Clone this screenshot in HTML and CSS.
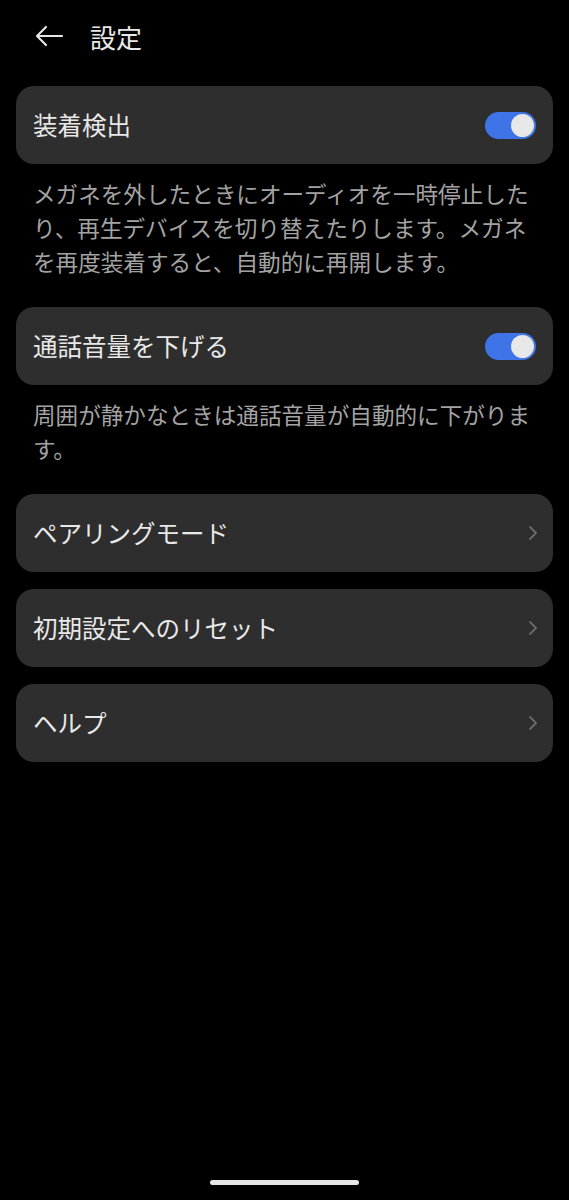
FILE: index.html
```html
<!DOCTYPE html>
<html lang="ja">
  <head>
    <meta charset="UTF-8" />
    <meta name="viewport" content="width=device-width, initial-scale=1" />
    <title>設定</title>
    <link rel="stylesheet" href="styles.css">
  </head>
  <body>
    <div class="screen">
      <header class="top-bar">
        <svg class="back-icon" width="30" height="24" viewBox="0 0 30 24">
          <path d="M28 12H3M12 3L3 12l9 9" fill="none" stroke="#e6e6e6" stroke-width="2.2" stroke-linecap="round" stroke-linejoin="round" />
        </svg>
        <h1>設定</h1>
      </header>

      <div class="card">
        <span class="card-title">装着検出</span>
        <span class="toggle on"><span class="knob"></span></span>
      </div>
      <p class="note">メガネを外したときにオーディオを一時停止したり、再生デバイスを切り替えたりします。メガネを再度装着すると、自動的に再開します。</p>

      <div class="card">
        <span class="card-title">通話音量を下げる</span>
        <span class="toggle on"><span class="knob"></span></span>
      </div>
      <p class="note">周囲が静かなときは通話音量が自動的に下がります。</p>

      <div class="link-list">
        <div class="card">
          <span class="card-title">ペアリングモード</span>
          <svg class="chevron" width="10" height="16" viewBox="0 0 10 16">
            <path d="M2 2l6 6-6 6" fill="none" stroke="#6a6a6a" stroke-width="1.8" stroke-linecap="round" stroke-linejoin="round" />
          </svg>
        </div>
        <div class="card">
          <span class="card-title">初期設定へのリセット</span>
          <svg class="chevron" width="10" height="16" viewBox="0 0 10 16">
            <path d="M2 2l6 6-6 6" fill="none" stroke="#6a6a6a" stroke-width="1.8" stroke-linecap="round" stroke-linejoin="round" />
          </svg>
        </div>
        <div class="card">
          <span class="card-title">ヘルプ</span>
          <svg class="chevron" width="10" height="16" viewBox="0 0 10 16">
            <path d="M2 2l6 6-6 6" fill="none" stroke="#6a6a6a" stroke-width="1.8" stroke-linecap="round" stroke-linejoin="round" />
          </svg>
        </div>
      </div>

      <div class="home-bar"></div>
    </div>
  </body>
</html>
```

FILE: styles.css
```css
body {
  margin: 0;
  background: #000;
  font-family: "Noto Sans CJK JP", "Noto Sans", sans-serif;
  color: #e8e8e8;
}

.screen {
  position: relative;
  width: 569px;
  height: 1200px;
  padding: 0 16px;
  box-sizing: border-box;
}

.top-bar {
  display: flex;
  align-items: center;
  height: 72px;
  padding-left: 18px;
  margin-bottom: 14px;
}

.back-icon {
  margin-right: 26px;
}

.top-bar h1 {
  margin: 0;
  font-size: 26px;
  font-weight: 400;
  color: #e8e8e8;
}

.card {
  display: flex;
  align-items: center;
  justify-content: space-between;
  height: 78px;
  padding: 0 17px;
  background: #2e2e2e;
  border-radius: 18px;
  box-sizing: border-box;
}

.card-title {
  font-size: 24.5px;
  line-height: 1;
}

.toggle {
  display: flex;
  align-items: center;
  width: 51px;
  height: 27px;
  border-radius: 14px;
  background: #3f74e8;
  padding: 2px;
  box-sizing: border-box;
  justify-content: flex-end;
}

.knob {
  width: 23px;
  height: 23px;
  border-radius: 50%;
  background: #e8e8e8;
}

.chevron {
  margin-right: -2px;
}

.note {
  margin: 13px 0 28px;
  padding: 0 17px;
  font-size: 22.6px;
  line-height: 34px;
  color: #a3a3a3;
}

.link-list {
  display: flex;
  flex-direction: column;
  gap: 17px;
  margin-top: 28px;
}

.home-bar {
  position: absolute;
  left: 210px;
  top: 1180px;
  width: 149px;
  height: 5px;
  border-radius: 3px;
  background: #e6e6e6;
}
```
